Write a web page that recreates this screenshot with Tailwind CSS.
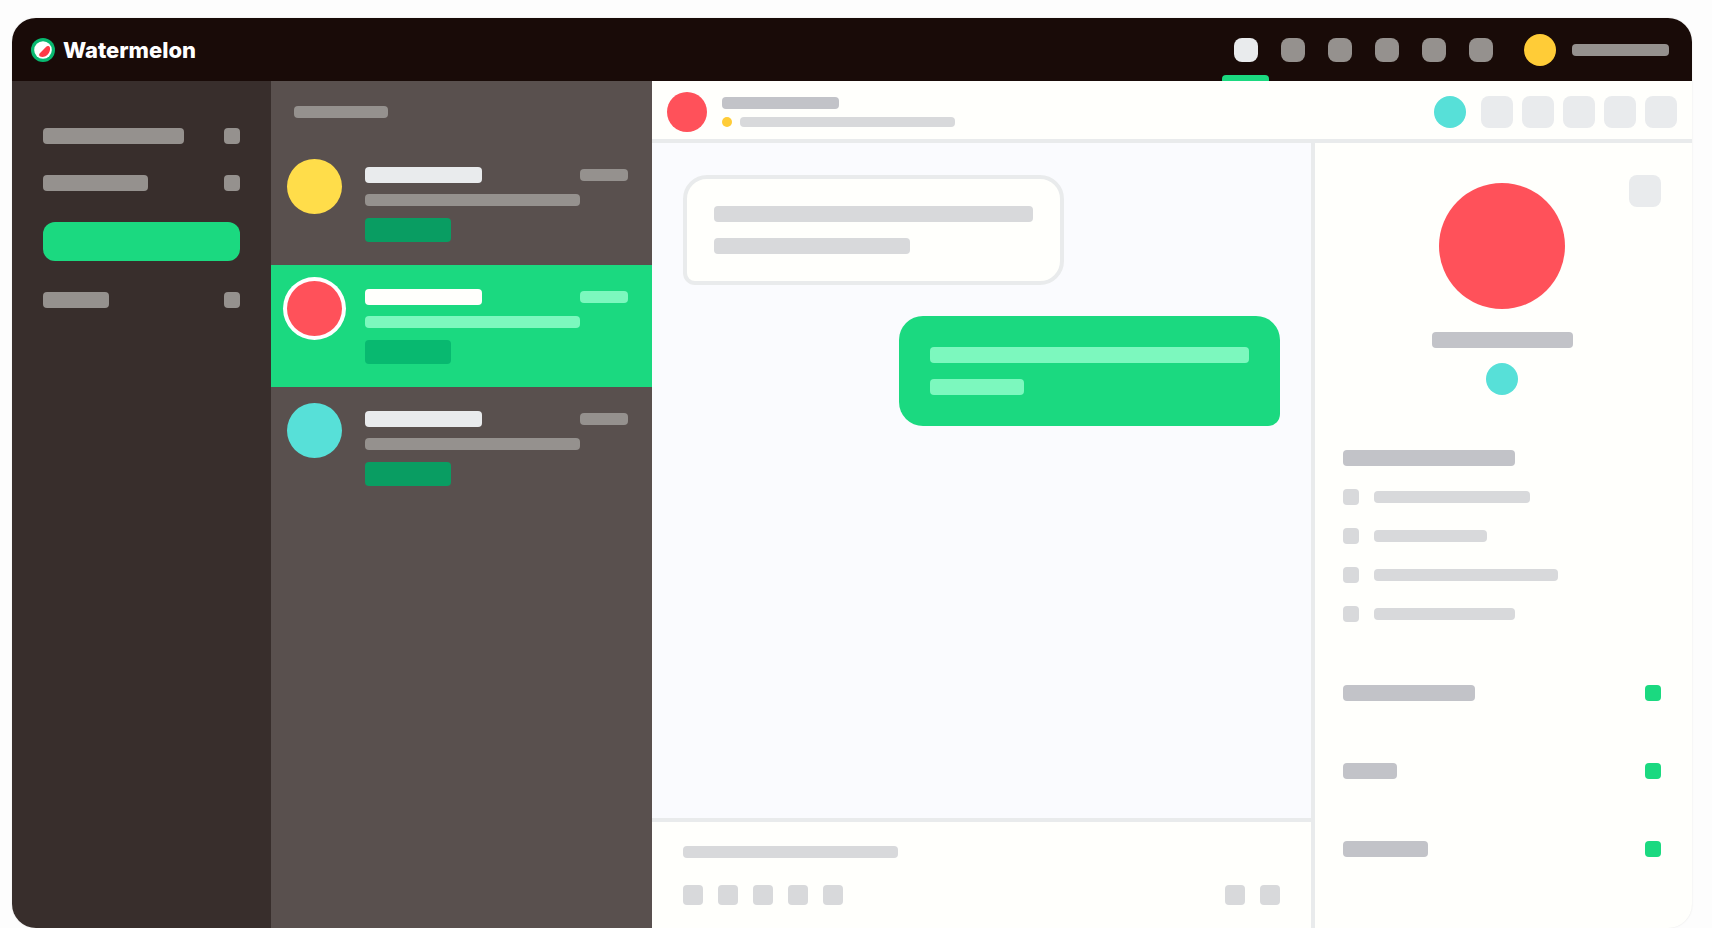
<!DOCTYPE html>
<html lang="en">
  <head>
    <meta charset="UTF-8" />
    <meta name="viewport" content="width=device-width, initial-scale=1.0"/>
    <title>Watermelon</title>
    <script src="https://cdn.jsdelivr.net/npm/@tailwindcss/browser@4"></script>
  </head>
  <body class="bg-[#fdfdfd] min-h-screen flex flex-col pt-[18px] pl-3 pr-5 font-['Inter',sans-serif]">
    <div class="flex-1 flex flex-col rounded-3xl overflow-hidden bg-[#fffffc] shadow-[0_0_2px_rgba(0,0,0,0.1)]">

      <!-- Top bar -->
      <header class="h-[63px] shrink-0 flex items-center justify-between bg-[#190b08] pl-[19px] pr-[23px]">
        <a href="#" class="flex items-center gap-2 text-white text-[22px] leading-6 font-extrabold">
          <svg class="w-6 h-6" viewBox="0 0 24 24" aria-hidden="true">
            <circle cx="12" cy="12" r="12" fill="#08b970"/>
            <circle cx="12" cy="12" r="8.8" fill="#fff"/>
            <path d="M9.2 18.6 C7.9 18 7.8 16.3 8.8 15.3 L15.2 8.7 C16.4 7.6 18.3 8 18.9 9.4 C20 14.8 14.8 20.2 9.2 18.6Z" fill="#ff3b47"/>
          </svg>
          <span>Watermelon</span>
        </a>
        <div class="h-full flex items-center">
          <nav class="h-full flex items-center gap-[23px]" aria-label="Main">
            <div class="relative h-full flex items-center">
              <button class="w-6 h-6 rounded-lg bg-[#e9ebed]" aria-label="Inbox"></button>
              <span class="absolute bottom-0 -left-3 w-[47px] h-1.5 rounded-t bg-[#1bd980]"></span>
            </div>
            <button class="w-6 h-6 rounded-lg bg-[#95918e]" aria-label="Contacts"></button>
            <button class="w-6 h-6 rounded-lg bg-[#95918e]" aria-label="Chatbot"></button>
            <button class="w-6 h-6 rounded-lg bg-[#95918e]" aria-label="Statistics"></button>
            <button class="w-6 h-6 rounded-lg bg-[#95918e]" aria-label="Settings"></button>
            <button class="w-6 h-6 rounded-lg bg-[#95918e]" aria-label="Help"></button>
          </nav>
          <button class="flex items-center gap-4 ml-[31px]" aria-label="Account">
            <span class="w-8 h-8 rounded-full bg-[#ffcc37]"></span>
            <span class="w-[97px] h-3 rounded bg-[#95918e]"></span>
          </button>
        </div>
      </header>

      <div class="flex-1 flex">

        <!-- Folders -->
        <aside class="w-[259px] shrink-0 bg-[#382e2c] px-[31px] pt-[47px]">
          <ul class="flex flex-col gap-[31px]">
            <li class="flex justify-between">
              <span class="w-[141px] h-4 rounded bg-[#95918e]"></span>
              <span class="w-4 h-4 rounded bg-[#95918e]"></span>
            </li>
            <li class="flex justify-between">
              <span class="w-[105px] h-4 rounded bg-[#95918e]"></span>
              <span class="w-4 h-4 rounded bg-[#95918e]"></span>
            </li>
            <li class="h-[39px] rounded-xl bg-[#1bd980]"></li>
            <li class="flex justify-between">
              <span class="w-[66px] h-4 rounded bg-[#95918e]"></span>
              <span class="w-4 h-4 rounded bg-[#95918e]"></span>
            </li>
          </ul>
        </aside>

        <!-- Conversations -->
        <section class="w-[381px] shrink-0 bg-[#59504e]">
          <div class="h-[62px] flex items-center px-[23px]">
            <span class="w-[94px] h-3 rounded bg-[#95918e]"></span>
          </div>
          <ul>
            <li class="h-[122px] flex gap-[23px] pl-4 pr-6 pt-4">
              <span class="w-[55px] h-[55px] shrink-0 rounded-full bg-[#ffdd4a]"></span>
              <div class="flex-1 pt-2">
                <div class="flex items-center justify-between">
                  <span class="w-[117px] h-4 rounded bg-[#e9ebed]"></span>
                  <span class="w-12 h-3 rounded bg-[#95918e]"></span>
                </div>
                <div class="w-[215px] h-3 mt-[11px] rounded bg-[#95918e]"></div>
                <div class="w-[86px] h-6 mt-3 rounded bg-[#099d62]"></div>
              </div>
            </li>
            <li class="h-[122px] flex gap-[23px] pl-4 pr-6 pt-4 bg-[#1bd980]">
              <span class="w-[55px] h-[55px] shrink-0 rounded-full bg-[#ff515a] ring-4 ring-white"></span>
              <div class="flex-1 pt-2">
                <div class="flex items-center justify-between">
                  <span class="w-[117px] h-4 rounded bg-[#fffffc]"></span>
                  <span class="w-12 h-3 rounded bg-[#7cf8be]"></span>
                </div>
                <div class="w-[215px] h-3 mt-[11px] rounded bg-[#7cf8be]"></div>
                <div class="w-[86px] h-6 mt-3 rounded bg-[#08b970]"></div>
              </div>
            </li>
            <li class="h-[122px] flex gap-[23px] pl-4 pr-6 pt-4">
              <span class="w-[55px] h-[55px] shrink-0 rounded-full bg-[#57e0d8]"></span>
              <div class="flex-1 pt-2">
                <div class="flex items-center justify-between">
                  <span class="w-[117px] h-4 rounded bg-[#e9ebed]"></span>
                  <span class="w-12 h-3 rounded bg-[#95918e]"></span>
                </div>
                <div class="w-[215px] h-3 mt-[11px] rounded bg-[#95918e]"></div>
                <div class="w-[86px] h-6 mt-3 rounded bg-[#099d62]"></div>
              </div>
            </li>
          </ul>
        </section>

        <main class="flex-1 min-w-0 flex flex-col">

          <!-- Conversation header -->
          <div class="flex items-center justify-between px-[15px] pt-[11px] pb-[7px] border-b-4 border-[#e9ebec]">
            <div class="flex items-center gap-[15px]">
              <span class="w-10 h-10 rounded-full bg-[#ff515a]"></span>
              <div class="flex flex-col gap-2">
                <span class="w-[117px] h-3 rounded bg-[#c2c3c8]"></span>
                <div class="flex gap-2">
                  <span class="w-2.5 h-2.5 rounded-full bg-[#ffcc37]"></span>
                  <span class="w-[215px] h-2.5 rounded bg-[#d8d9db]"></span>
                </div>
              </div>
            </div>
            <div class="flex items-center gap-[9px]">
              <span class="w-8 h-8 mr-1.5 rounded-full bg-[#57e0d8]"></span>
              <button class="w-8 h-8 rounded-lg bg-[#e9ebed]" aria-label="Assign"></button>
              <button class="w-8 h-8 rounded-lg bg-[#e9ebed]" aria-label="Label"></button>
              <button class="w-8 h-8 rounded-lg bg-[#e9ebed]" aria-label="Snooze"></button>
              <button class="w-8 h-8 rounded-lg bg-[#e9ebed]" aria-label="Close"></button>
              <button class="w-8 h-8 rounded-lg bg-[#e9ebed]" aria-label="More"></button>
            </div>
          </div>

          <div class="flex-1 flex">
            <div class="flex-1 min-w-0 flex flex-col">

              <!-- Messages -->
              <div class="flex-1 flex flex-col gap-[31px] bg-[#fafbfe] px-[31px] py-8">
                <div class="self-start w-[381px] flex flex-col gap-4 p-[27px] border-4 border-[#e9ebec] rounded-3xl rounded-bl-xl bg-[#fffffc]">
                  <span class="h-4 rounded bg-[#d8d9db]"></span>
                  <span class="w-[196px] h-4 rounded bg-[#d8d9db]"></span>
                </div>
                <div class="self-end w-[381px] flex flex-col gap-4 p-[31px] rounded-3xl rounded-br-xl bg-[#1bd980]">
                  <span class="h-4 rounded bg-[#7cf8be]"></span>
                  <span class="w-[94px] h-4 rounded bg-[#7cf8be]"></span>
                </div>
              </div>

              <!-- Composer -->
              <div class="border-t-4 border-[#e9ebec] px-[31px] pt-6 pb-[23px]">
                <div class="w-[215px] h-3 rounded bg-[#d8d9db]"></div>
                <div class="flex justify-between mt-[27px]">
                  <div class="flex gap-[15px]">
                    <button class="w-5 h-5 rounded bg-[#d8d9db]" aria-label="Emoji"></button>
                    <button class="w-5 h-5 rounded bg-[#d8d9db]" aria-label="Attachment"></button>
                    <button class="w-5 h-5 rounded bg-[#d8d9db]" aria-label="Image"></button>
                    <button class="w-5 h-5 rounded bg-[#d8d9db]" aria-label="Template"></button>
                    <button class="w-5 h-5 rounded bg-[#d8d9db]" aria-label="Note"></button>
                  </div>
                  <div class="flex gap-[15px]">
                    <button class="w-5 h-5 rounded bg-[#d8d9db]" aria-label="Options"></button>
                    <button class="w-5 h-5 rounded bg-[#d8d9db]" aria-label="Send"></button>
                  </div>
                </div>
              </div>
            </div>

            <!-- Contact details -->
            <aside class="relative w-[381px] shrink-0 border-l-4 border-[#e9ebec] pl-7 pr-[31px] pt-10">
              <button class="absolute top-8 right-[31px] w-8 h-8 rounded-lg bg-[#e9ebed]" aria-label="Edit contact"></button>
              <div class="flex flex-col items-center">
                <span class="w-[126px] h-[126px] rounded-full bg-[#ff515a]"></span>
                <span class="w-[141px] h-4 mt-[23px] rounded bg-[#c2c3c8]"></span>
                <span class="w-8 h-8 mt-[15px] rounded-full bg-[#57e0d8]"></span>
              </div>
              <div class="w-[172px] h-4 mt-[55px] rounded bg-[#c2c3c8]"></div>
              <ul class="flex flex-col gap-[23px] mt-[23px]">
                <li class="flex items-center gap-[15px]">
                  <span class="w-4 h-4 rounded bg-[#d8d9db]"></span>
                  <span class="w-[156px] h-3 rounded bg-[#d8d9db]"></span>
                </li>
                <li class="flex items-center gap-[15px]">
                  <span class="w-4 h-4 rounded bg-[#d8d9db]"></span>
                  <span class="w-[113px] h-3 rounded bg-[#d8d9db]"></span>
                </li>
                <li class="flex items-center gap-[15px]">
                  <span class="w-4 h-4 rounded bg-[#d8d9db]"></span>
                  <span class="w-[184px] h-3 rounded bg-[#d8d9db]"></span>
                </li>
                <li class="flex items-center gap-[15px]">
                  <span class="w-4 h-4 rounded bg-[#d8d9db]"></span>
                  <span class="w-[141px] h-3 rounded bg-[#d8d9db]"></span>
                </li>
              </ul>
              <ul class="flex flex-col gap-[62px] mt-[63px]">
                <li class="flex justify-between">
                  <span class="w-[132px] h-4 rounded bg-[#c2c3c8]"></span>
                  <button class="w-4 h-4 rounded bg-[#1bd980]" aria-label="Add"></button>
                </li>
                <li class="flex justify-between">
                  <span class="w-[54px] h-4 rounded bg-[#c2c3c8]"></span>
                  <button class="w-4 h-4 rounded bg-[#1bd980]" aria-label="Add"></button>
                </li>
                <li class="flex justify-between">
                  <span class="w-[85px] h-4 rounded bg-[#c2c3c8]"></span>
                  <button class="w-4 h-4 rounded bg-[#1bd980]" aria-label="Add"></button>
                </li>
              </ul>
            </aside>
          </div>
        </main>
      </div>
    </div>
  </body>
</html>
